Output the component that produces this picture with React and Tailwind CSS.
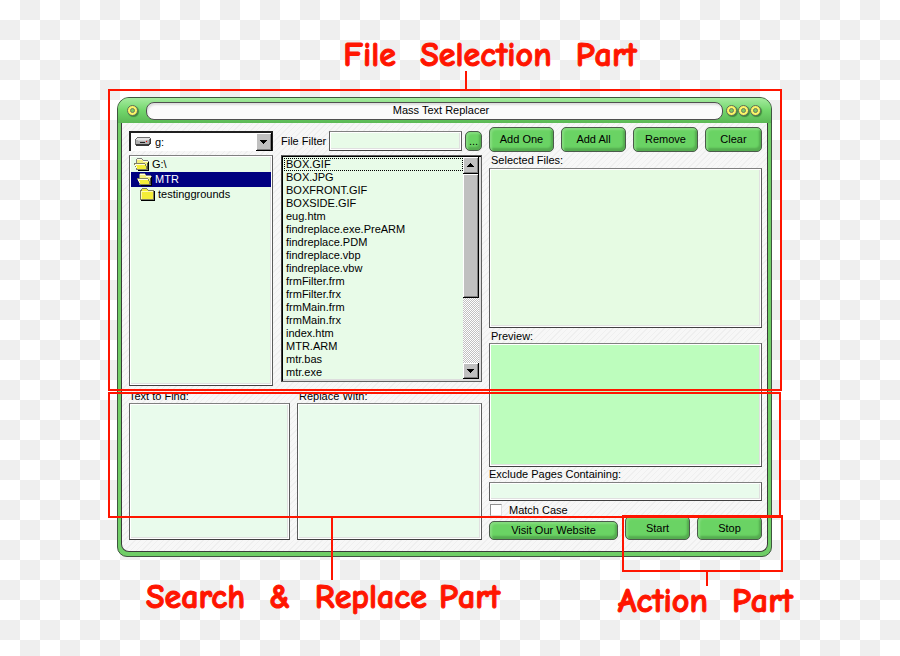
import React, { useState } from 'react';

const files = [
  'BOX.GIF',
  'BOX.JPG',
  'BOXFRONT.GIF',
  'BOXSIDE.GIF',
  'eug.htm',
  'findreplace.exe.PreARM',
  'findreplace.PDM',
  'findreplace.vbp',
  'findreplace.vbw',
  'frmFilter.frm',
  'frmFilter.frx',
  'frmMain.frm',
  'frmMain.frx',
  'index.htm',
  'MTR.ARM',
  'mtr.bas',
  'mtr.exe',
];

const folders = [
  { name: 'G:\\', open: true, indent: 'pl-[3px]' },
  { name: 'MTR', open: true, indent: 'pl-1.5' },
  { name: 'testinggrounds', open: false, indent: 'pl-[9px]' },
];

const sunken = 'border border-t-[#808080] border-x-[#5c5c5c] border-b-[#404040] shadow-[inset_0_0_0_1px_#fff,inset_-2px_-2px_0_#e0e0e0]';

function FolderIcon({ open }) {
  return (
    <svg width="16" height="13" viewBox="0 0 16 13" shapeRendering="crispEdges" className="shrink-0">
      {open ? (
        <>
          {/* back cover with tab */}
          <path d="M3 0h5v1h1v1h5v1h1v9H2V1h1z" fill="#808080" />
          <path d="M3 1h5v1h1v1h5v8H3z" fill="#f3ee7c" />
          <path d="M3 1h5v1H3zM9 3h5v1H9z" fill="#fffde0" />
          <path d="M14 4h1v9H4v-1h10z" fill="#000" />
          <path d="M13 5h1v6h-1z" fill="#505040" />
          {/* front flap */}
          <path d="M0 5h11v1h1v2h1v3h1v1H3v-1H2V9H1V7H0z" fill="#808060" />
          <path d="M1 6h10v2h1v3H3V9H2V7H1z" fill="#f4ee38" />
          <path d="M1 6h10v1H2v1H1zM2 8h1v2H2z" fill="#fffde0" />
        </>
      ) : (
        <>
          <path d="M2 0h5v1h1v1h6v10H0V2h1V1h1z" fill="#808060" />
          <path d="M2 1h5v1h1v1h5v8H1V3h1z" fill="#f4ee38" />
          <path d="M1 3h12v1H2v7H1z" fill="#fffbb0" />
          <path d="M14 3h1v10H1v-1h13z" fill="#000" />
        </>
      )}
    </svg>
  );
}

function DriveIcon() {
  return (
    <svg width="16" height="9" viewBox="0 0 16 9" shapeRendering="crispEdges" className="absolute top-1 left-1">
      <path d="M2 0h13v1h1v6h-1v1h-1v1H1V8H0V2h1V1h1z" fill="#707070" />
      <path d="M2 1h13v1h-1v1H1V2h1z" fill="#e4e4e4" />
      <path d="M1 3h13v4H1z" fill="#b0b0b0" />
      <path d="M3 3h8v1H3z" fill="#d0d0d0" />
      <path d="M5 5h5v1H5z" fill="#202020" />
      <path d="M11 4h1v1h-1z" fill="#f00" />
      <path d="M1 8V7h13V6h1V2h1v5h-1v1h-1v1H1z" fill="#383838" />
    </svg>
  );
}

function Arrow({ up }) {
  return (
    <svg width="7" height="4" viewBox="0 0 7 4" shapeRendering="crispEdges">
      <path d={up ? 'M3 0h1v1h1v1h1v1h1v1H0V3h1V2h1V1h1z' : 'M0 0h7v1H6v1H5v1H4v1H3V3H2V2H1V1H0z'} fill="#000" />
    </svg>
  );
}

const bevel = 'bg-[#c0c0c0] border-r border-b border-black shadow-[inset_1px_1px_0_#fff,inset_-1px_-1px_0_#808080]';

function GreenButton({ children, className = '' }) {
  return (
    <button
      className={`flex items-center justify-center rounded-[5px] border border-[#4c5a4c] bg-[#6ad364] whitespace-nowrap shadow-[inset_2px_2px_2px_#85dc7f,inset_-2px_-3px_2px_#55ac50] ${className}`}
    >
      {children}
    </button>
  );
}

function RoundButton({ label }) {
  return (
    <button aria-label={label} className="flex size-[11px] items-center justify-center rounded-full border border-[#5c6e58] bg-[#fbf567] shadow-[1px_1px_1px_#3f8a3a]">
      <span className="block size-[5px] rounded-full border border-[#6f7c60] bg-[#7ccc60]" />
    </button>
  );
}

function Caption({ children, className = '' }) {
  return (
    <h2 className={`font-['Comic_Sans_MS','Comic_Neue',Lato,sans-serif] text-[34px] leading-9 font-bold whitespace-pre text-[#ff1500] [-webkit-text-stroke:1px_#ff1500] ${className}`}>
      {children}
    </h2>
  );
}

export default function App() {
  const [drive, setDrive] = useState('g:');
  const [folder, setFolder] = useState('MTR');

  return (
    <div className="min-h-screen bg-[repeating-conic-gradient(#efefef_0_25%,#fff_0_50%)] bg-size-[40px_40px] pt-[37px] pr-[107px] pl-[117px] font-['Liberation_Sans',Arial,sans-serif] text-[11px] leading-[13px] text-black">
      <Caption className="pl-[70px] text-center">File  Selection  Part</Caption>

      {/* Program window */}
      <div className="relative mt-6 mr-[21px] rounded-t-[12px] rounded-b-[10px] border border-[#3f5540] bg-[#6fcd66]">
        <header className="flex h-[25px] items-center gap-2 rounded-t-[11px] bg-linear-to-b from-[#a5eb9f] via-[#72d66b] to-[#5bb855] pr-[10px] pl-[9px]">
          <RoundButton label="Menu" />
          <h1 className="h-[18px] flex-1 rounded-[8px] border border-[#505050] bg-[#fbfbfb] pl-[13px] text-center leading-[15px] shadow-[inset_1px_2px_2px_#ddd]">
            Mass Text Replacer
          </h1>
          <div className="-ml-[5px] flex gap-px">
            <RoundButton label="Minimize" />
            <RoundButton label="Maximize" />
            <RoundButton label="Close" />
          </div>
        </header>

        <main className="mx-[3px] mb-1 grid grid-cols-[353fr_273fr] gap-[7px] rounded-b-[8px] border border-t-0 border-[#3a3a3a] bg-[#f5f5f5] bg-[repeating-linear-gradient(135deg,#efefef_0_1px,#f7f7f7_1px_4px)] pt-1 pr-[5px] pb-[11px] pl-[7px]">
          <section className="flex min-w-0 flex-col pt-1">
            <div className="grid grid-cols-[144fr_201fr] gap-2">
              <div className="flex min-w-0 flex-col">
                <div className="relative mb-1 h-5 border-t-2 border-r border-l-2 border-[#202020] bg-white">
                  <DriveIcon />
                  <select
                    aria-label="Drive"
                    value={drive}
                    onChange={(e) => setDrive(e.target.value)}
                    className="h-full w-full appearance-none bg-transparent pl-6 outline-none"
                  >
                    <option value="g:">g:</option>
                  </select>
                  <span className={`pointer-events-none absolute top-0 right-0 flex h-[18px] w-4 items-center justify-center ${bevel}`}>
                    <Arrow />
                  </span>
                </div>
                <ul role="listbox" aria-label="Folders" className={`h-[231px] bg-[#e8fbe8] px-px pt-px ${sunken}`}>
                  {folders.map((f) => (
                    <li
                      key={f.name}
                      role="option"
                      aria-selected={folder === f.name}
                      onClick={() => setFolder(f.name)}
                      className={`flex h-[15px] items-center gap-[2px] ${f.indent} ${folder === f.name ? 'bg-[#000080] text-white' : ''}`}
                    >
                      <FolderIcon open={f.open} />
                      {f.name}
                    </li>
                  ))}
                </ul>
              </div>

              <div className="flex min-w-0 flex-col">
                <div className="mb-1 flex h-5 items-center">
                  <label htmlFor="filter" className="w-12 shrink-0 whitespace-nowrap">File Filter</label>
                  <input id="filter" className={`h-5 min-w-0 flex-1 bg-[#e8fbe8] px-1 ${sunken}`} />
                  <GreenButton className="ml-[3px] h-5 w-[17px]">...</GreenButton>
                </div>
                <div className="flex h-[227px] border border-[#606060] border-l-[#404040] bg-[#e8fbe8] p-px shadow-[inset_1px_1px_0_#000,inset_-2px_-2px_0_#ddd]">
                  <ul role="listbox" aria-label="Files" className="min-w-0 flex-1 overflow-hidden pt-px pl-px">
                    {files.map((name, i) => (
                      <li
                        key={name}
                        role="option"
                        aria-selected={i === 0}
                        className={`h-[13px] pl-[2px] ${i === 0 ? 'outline -outline-offset-1 outline-black outline-dotted' : ''}`}
                      >
                        {name}
                      </li>
                    ))}
                  </ul>
                  <div className="mr-px mb-px flex w-4 flex-col bg-[repeating-conic-gradient(#c0c0c0_0_25%,#fff_0_50%)] bg-size-[2px_2px]">
                    <button aria-label="Scroll up" className={`flex h-[17px] items-center justify-center ${bevel}`}>
                      <Arrow up />
                    </button>
                    <div className={`h-[124px] ${bevel}`} />
                    <button aria-label="Scroll down" className={`mt-auto flex h-4 items-center justify-center ${bevel}`}>
                      <Arrow />
                    </button>
                  </div>
                </div>
              </div>
            </div>

            <div className="mt-1 grid flex-1 grid-cols-[161fr_185fr] gap-[7px]">
              <div className="flex min-w-0 flex-col">
                <label htmlFor="find">Text to Find:</label>
                <textarea id="find" className={`flex-1 resize-none bg-[#e9fbec] p-1 ${sunken}`} />
              </div>
              <div className="flex min-w-0 flex-col">
                <label htmlFor="replace" className="pl-[2px]">Replace With:</label>
                <textarea id="replace" className={`flex-1 resize-none bg-[#e9fbec] p-1 ${sunken}`} />
              </div>
            </div>
          </section>

          <section className="flex min-w-0 flex-col">
            <div className="grid h-[25px] grid-cols-[65fr_65fr_65fr_57fr] gap-[7px]">
              <GreenButton>Add One</GreenButton>
              <GreenButton>Add All</GreenButton>
              <GreenButton>Remove</GreenButton>
              <GreenButton>Clear</GreenButton>
            </div>
            <label htmlFor="selected" className="mt-[2px] mb-px pl-[2px]">Selected Files:</label>
            <textarea id="selected" readOnly className={`h-[160px] resize-none bg-[#e6fbe3] p-1 ${sunken}`} />
            <label htmlFor="preview" className="mt-[2px] pl-[2px]">Preview:</label>
            <textarea id="preview" readOnly className={`h-[124px] resize-none bg-[#bdfdbd] p-1 ${sunken}`} />
            <label htmlFor="exclude" className="mt-px mb-px">Exclude Pages Containing:</label>
            <input id="exclude" className={`h-[19px] bg-[#e9fbec] px-1 ${sunken}`} />
            <label className="mt-[3px] flex h-3 items-center gap-[7px]">
              <input type="checkbox" className="ml-px size-3 appearance-none border border-t-[#909090] border-r-[#ddd] border-b-[#ddd] border-l-[#909090] bg-white checked:bg-[#6ad364]" />
              Match Case
            </label>
            <div className="grid h-6 grid-cols-[129fr_65fr_65fr] items-end gap-[7px]">
              <GreenButton className="h-[19px]">Visit Our Website</GreenButton>
              <GreenButton className="h-6">Start</GreenButton>
              <GreenButton className="h-6">Stop</GreenButton>
            </div>
          </section>
        </main>

        {/* Callout frames and their leader lines */}
        <div className="pointer-events-none absolute -top-[9px] -right-[11px] -left-[10px] h-[302px] border-2 border-[#ff1500]">
          <div className="absolute bottom-full left-[53%] h-5 w-[2px] bg-[#ff1500]" />
        </div>
        <div className="pointer-events-none absolute top-[294px] -right-[10px] -left-[10px] h-[126px] border-2 border-[#ff1500]">
          <div className="absolute top-full left-[33%] h-16 w-[2px] bg-[#ff1500]" />
        </div>
        <div className="pointer-events-none absolute top-[417px] -right-[12px] h-[57px] w-[161px] border-2 border-[#ff1500]">
          <div className="absolute top-full left-[82px] h-4 w-[2px] bg-[#ff1500]" />
        </div>
      </div>

      <div className="mt-[22px] flex justify-between pl-[29px]">
        <Caption>Search  &amp;  Replace Part</Caption>
        <Caption className="pt-1">Action  Part</Caption>
      </div>
    </div>
  );
}
